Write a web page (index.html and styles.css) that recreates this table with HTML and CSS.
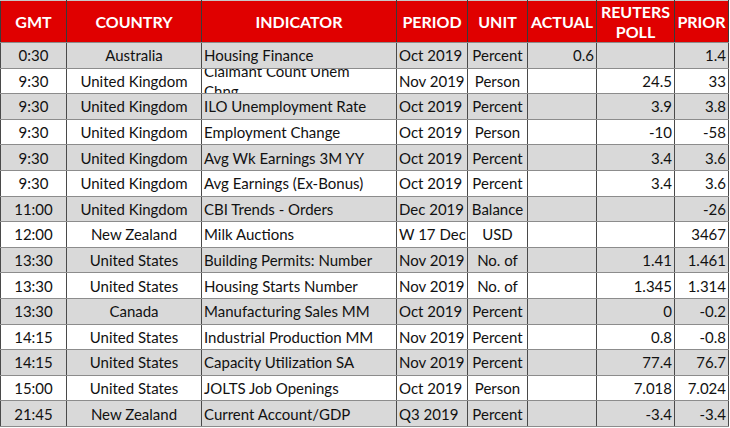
FILE: index.html
```html
<!DOCTYPE html>
<html>
<head>
<meta charset="utf-8">
<link rel="stylesheet" href="styles.css">
</head>
<body>
<table class="cal">
  <colgroup>
    <col class="c-gmt"><col class="c-country"><col class="c-ind"><col class="c-period"><col class="c-unit"><col class="c-actual"><col class="c-poll"><col class="c-prior">
  </colgroup>
  <thead>
    <tr>
      <th>GMT</th><th>COUNTRY</th><th>INDICATOR</th><th>PERIOD</th><th>UNIT</th><th>ACTUAL</th><th>REUTERS POLL</th><th>PRIOR</th>
    </tr>
  </thead>
  <tbody>
    <tr class="g"><td class="ctr">0:30</td><td class="ctr">Australia</td><td class="ind">Housing Finance</td><td class="per">Oct 2019</td><td class="ctr">Percent</td><td class="num">0.6</td><td class="num"></td><td class="num">1.4</td></tr>
    <tr><td class="ctr">9:30</td><td class="ctr">United Kingdom</td><td class="ind"><div class="clip"><span>Claimant Count Unem<br>Chng</span></div></td><td class="per">Nov 2019</td><td class="ctr">Person</td><td class="num"></td><td class="num">24.5</td><td class="num">33</td></tr>
    <tr class="g"><td class="ctr">9:30</td><td class="ctr">United Kingdom</td><td class="ind">ILO Unemployment Rate</td><td class="per">Oct 2019</td><td class="ctr">Percent</td><td class="num"></td><td class="num">3.9</td><td class="num">3.8</td></tr>
    <tr><td class="ctr">9:30</td><td class="ctr">United Kingdom</td><td class="ind">Employment Change</td><td class="per">Oct 2019</td><td class="ctr">Person</td><td class="num"></td><td class="num">-10</td><td class="num">-58</td></tr>
    <tr class="g"><td class="ctr">9:30</td><td class="ctr">United Kingdom</td><td class="ind">Avg Wk Earnings 3M YY</td><td class="per">Oct 2019</td><td class="ctr">Percent</td><td class="num"></td><td class="num">3.4</td><td class="num">3.6</td></tr>
    <tr><td class="ctr">9:30</td><td class="ctr">United Kingdom</td><td class="ind">Avg Earnings (Ex-Bonus)</td><td class="per">Oct 2019</td><td class="ctr">Percent</td><td class="num"></td><td class="num">3.4</td><td class="num">3.6</td></tr>
    <tr class="g"><td class="ctr">11:00</td><td class="ctr">United Kingdom</td><td class="ind">CBI Trends - Orders</td><td class="per">Dec 2019</td><td class="ctr">Balance</td><td class="num"></td><td class="num"></td><td class="num">-26</td></tr>
    <tr><td class="ctr">12:00</td><td class="ctr">New Zealand</td><td class="ind">Milk Auctions</td><td class="per">W 17 Dec</td><td class="ctr">USD</td><td class="num"></td><td class="num"></td><td class="num">3467</td></tr>
    <tr class="g"><td class="ctr">13:30</td><td class="ctr">United States</td><td class="ind">Building Permits: Number</td><td class="per">Nov 2019</td><td class="ctr">No. of</td><td class="num"></td><td class="num">1.41</td><td class="num">1.461</td></tr>
    <tr><td class="ctr">13:30</td><td class="ctr">United States</td><td class="ind">Housing Starts Number</td><td class="per">Nov 2019</td><td class="ctr">No. of</td><td class="num"></td><td class="num">1.345</td><td class="num">1.314</td></tr>
    <tr class="g"><td class="ctr">13:30</td><td class="ctr">Canada</td><td class="ind">Manufacturing Sales MM</td><td class="per">Oct 2019</td><td class="ctr">Percent</td><td class="num"></td><td class="num">0</td><td class="num">-0.2</td></tr>
    <tr><td class="ctr">14:15</td><td class="ctr">United States</td><td class="ind">Industrial Production MM</td><td class="per">Nov 2019</td><td class="ctr">Percent</td><td class="num"></td><td class="num">0.8</td><td class="num">-0.8</td></tr>
    <tr class="g"><td class="ctr">14:15</td><td class="ctr">United States</td><td class="ind">Capacity Utilization SA</td><td class="per">Nov 2019</td><td class="ctr">Percent</td><td class="num"></td><td class="num">77.4</td><td class="num">76.7</td></tr>
    <tr><td class="ctr">15:00</td><td class="ctr">United States</td><td class="ind">JOLTS Job Openings</td><td class="per">Oct 2019</td><td class="ctr">Person</td><td class="num"></td><td class="num">7.018</td><td class="num">7.024</td></tr>
    <tr class="g"><td class="ctr">21:45</td><td class="ctr">New Zealand</td><td class="ind">Current Account/GDP</td><td class="per">Q3 2019</td><td class="ctr">Percent</td><td class="num"></td><td class="num">-3.4</td><td class="num">-3.4</td></tr>
  </tbody>
</table>
</body>
</html>
```

FILE: styles.css
```css
html, body {
  margin: 0;
  padding: 0;
  background: #ffffff;
}

.cal {
  border-collapse: collapse;
  table-layout: fixed;
  width: 728px;
  font-family: Lato, "Open Sans", "Liberation Sans", sans-serif;
  font-size: 15px;
  color: #111111;
}

.c-gmt { width: 66px; }
.c-country { width: 135px; }
.c-ind { width: 195px; }
.c-period { width: 71px; }
.c-unit { width: 60px; }
.c-actual { width: 69px; }
.c-poll { width: 78px; }
.c-prior { width: 54px; }

.cal thead tr { height: 42px; }
.cal tbody tr { height: 25.6px; }

.cal th {
  background: #e00000;
  color: #ffffff;
  font-weight: 700;
  font-size: 16px;
  padding: 0 2px;
  line-height: 20px;
  text-align: center;
  vertical-align: middle;
  border-left: 1px solid #3a3a3a;
  border-right: 1px solid #3a3a3a;
  border-top: 1px solid #c8c8c8;
  border-bottom: 1px solid #8c8c8c;
}

.cal td {
  padding: 0 2px;
  line-height: 18px;
  white-space: nowrap;
  overflow: hidden;
  vertical-align: middle;
  border-left: 1px solid #4a4a4a;
  border-right: 1px solid #4a4a4a;
  border-bottom: 1px solid #8c8c8c;
}

.cal tr.g td {
  background: #d9d9d9;
}

.ctr { text-align: center; }
.num { text-align: right; }
.per { text-align: left; padding-left: 2px; }
.ind { text-align: left; padding-left: 3px; }

.clip {
  height: 24px;
  overflow: hidden;
  display: flex;
  align-items: center;
}

.clip span {
  display: block;
  line-height: 20px;
  white-space: nowrap;
}
```
